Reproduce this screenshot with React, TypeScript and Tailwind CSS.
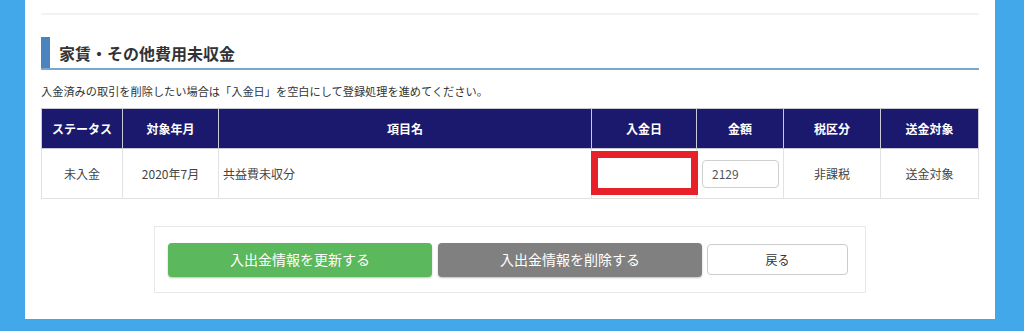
const font = { fontFamily: '"Noto Sans CJK JP", "Noto Sans", sans-serif' };

const headers = [
  { label: "ステータス", w: "w-[81px]" },
  { label: "対象年月", w: "w-[96px]" },
  { label: "項目名", w: "" },
  { label: "入金日", w: "w-[105px]" },
  { label: "金額", w: "w-[87px]" },
  { label: "税区分", w: "w-[97px]" },
  { label: "送金対象", w: "w-[98px]" },
];

export default function App() {
  return (
    <div className="h-[331px] w-[1024px] overflow-hidden bg-[#42a8ea]" style={font}>
      <div className="ml-[25px] h-[319px] w-[970px] bg-white px-4 pt-[13px]">
        <div className="h-[2px] bg-[#f2f2f2]" />

        {/* heading */}
        <div className="mt-[22px] flex h-[33px] items-center border-b-2 border-[#7aa5cc]">
          <div className="h-full w-[9px] bg-[#4a83bd]" />
          <h2 className="ml-[9px] text-[16px] font-bold text-[#333]">家賃・その他費用未収金</h2>
        </div>

        <p className="mt-[13px] text-[11.2px] leading-4 text-[#333]">
          入金済みの取引を削除したい場合は「入金日」を空白にして登録処理を進めてください。
        </p>

        {/* table */}
        <table className="mt-[9px] w-full table-fixed border-collapse text-[12px]">
          <thead>
            <tr className="h-[40px] bg-[#1b196e] text-white">
              {headers.map((h) => (
                <th key={h.label} className={`${h.w} border border-[#c9c9d6] font-bold`}>
                  {h.label}
                </th>
              ))}
            </tr>
          </thead>
          <tbody className="text-[#444]">
            <tr className="h-[50px]">
              <td className="border border-[#e2e2e2] text-center">未入金</td>
              <td className="border border-[#e2e2e2] text-center">2020年7月</td>
              <td className="border border-[#e2e2e2] px-1">共益費未収分</td>
              <td className="border border-[#e2e2e2] p-0">
                <div className="mx-auto h-[44px] w-[107px] -translate-x-[1px] -translate-y-[1px] border-[7px] border-[#e8202a] bg-white" />
              </td>
              <td className="border border-[#e2e2e2] px-[5px]">
                <div className="flex h-[28px] w-[77px] items-center rounded-[4px] border border-[#cfcfcf] px-[9px] text-[#555]">
                  2129
                </div>
              </td>
              <td className="border border-[#e2e2e2] text-center">非課税</td>
              <td className="border border-[#e2e2e2] text-center">送金対象</td>
            </tr>
          </tbody>
        </table>

        {/* buttons */}
        <div className="ml-[113px] mt-[27px] flex h-[67px] w-[712px] items-center gap-[6px] border border-[#e8e8e8] pl-[13px]">
          <button className="h-[34px] w-[264px] rounded-[4px] bg-[#5cb85c] text-[14px] text-white shadow-[0_1px_2px_rgba(0,0,0,0.25)]">
            入出金情報を更新する
          </button>
          <button className="h-[34px] w-[264px] rounded-[4px] bg-[#808080] text-[14px] text-white shadow-[0_1px_2px_rgba(0,0,0,0.25)]">
            入出金情報を削除する
          </button>
          <button className="ml-[-1px] h-[31px] w-[141px] rounded-[4px] border border-[#cccccc] bg-white text-[12px] text-[#333]">
            戻る
          </button>
        </div>
      </div>
    </div>
  );
}
